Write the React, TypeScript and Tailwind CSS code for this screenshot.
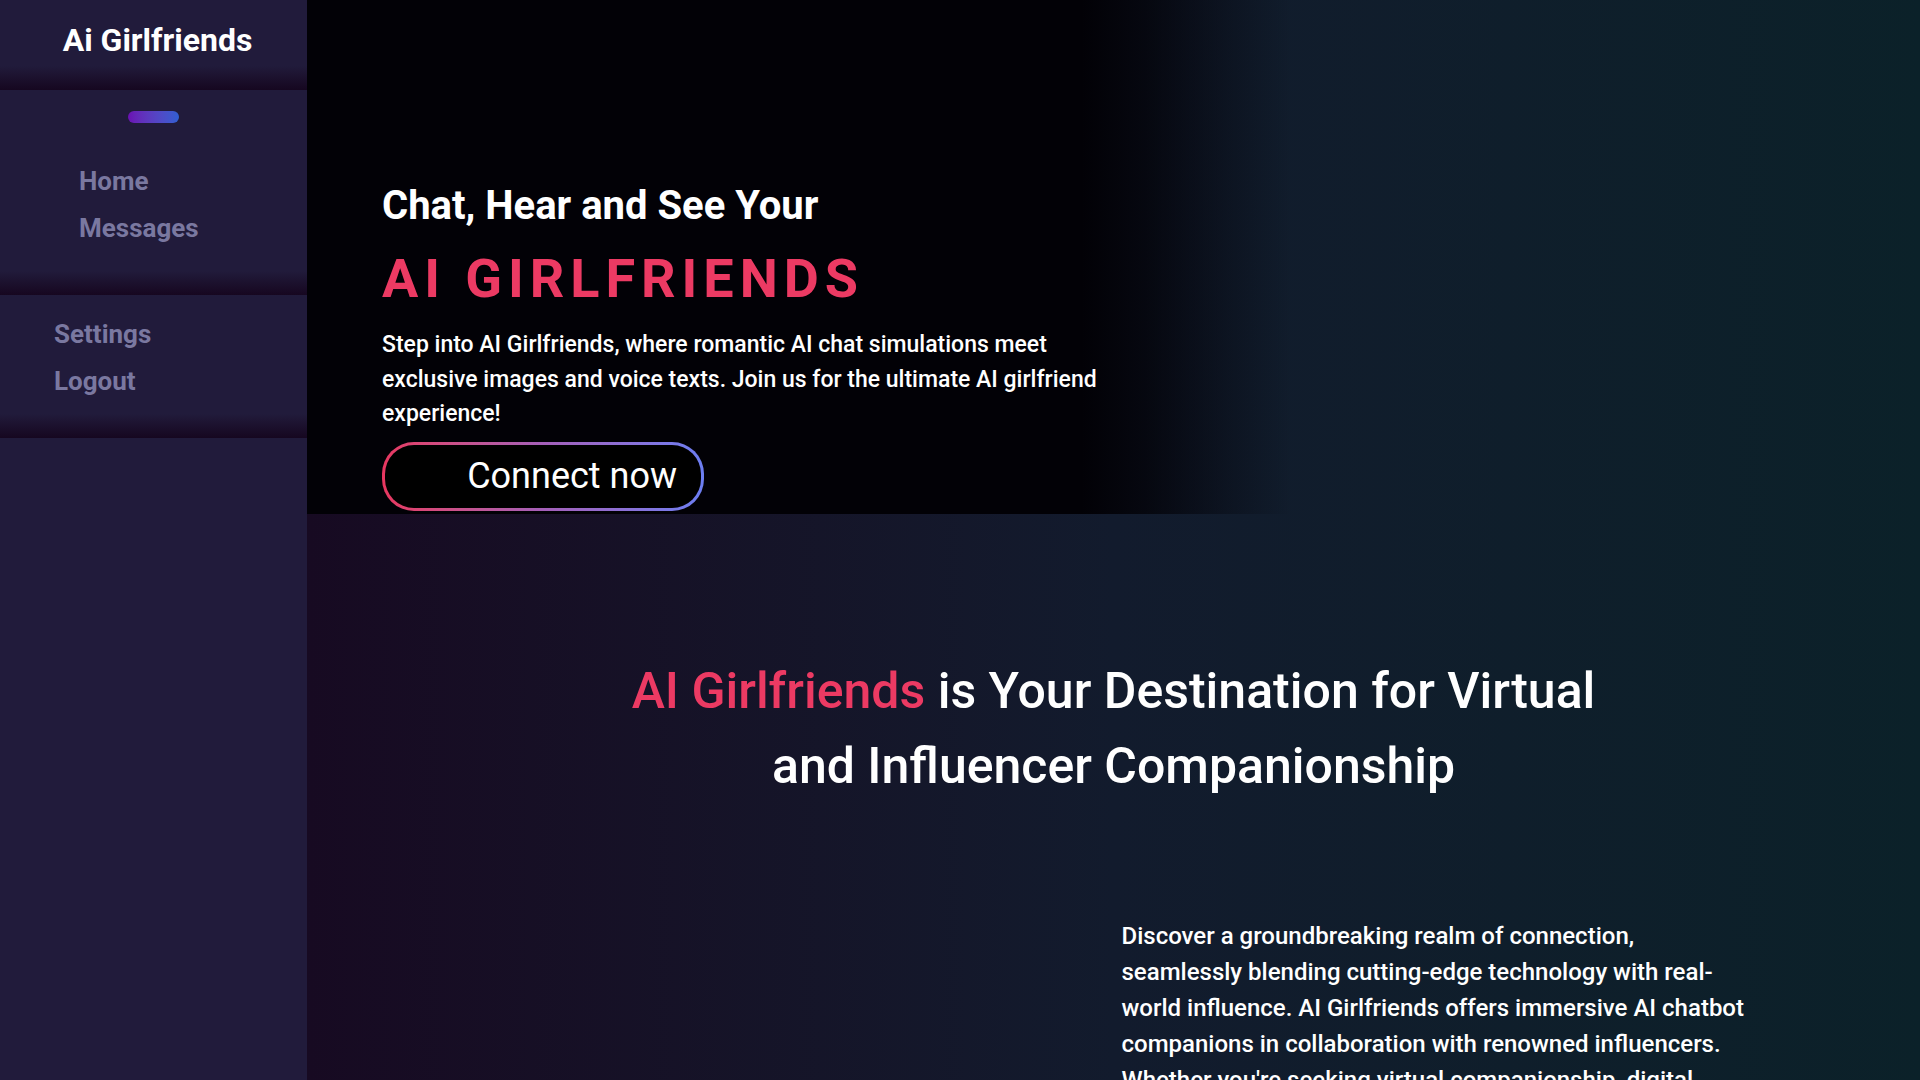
import React from "react"

const NAV_TOP = ["Home", "Messages"]
const NAV_BOTTOM = ["Settings", "Logout"]

function SectionShade() {
  return <div className="h-[24px] bg-linear-to-b from-[#211b3b] to-[#160720]" />
}

function Sidebar() {
  return (
    <aside className="w-[307px] shrink-0 h-full bg-[#211b3b] flex flex-col">
      {/* Logo */}
      <div className="h-[90px] flex flex-col">
        <div className="flex-1 flex justify-center pl-[8px] pt-[24px]">
          <span className="text-[32px] font-bold text-white leading-[32px]">Ai Girlfriends</span>
        </div>
        <SectionShade />
      </div>

      {/* Main nav */}
      <div className="h-[205px] flex flex-col">
        <div className="flex-1 flex flex-col">
          <div className="mt-[21px] mx-auto w-[51px] h-[12px] rounded-full bg-linear-to-r from-[#6a0fb3] to-[#2f5fd2]" />
          <nav className="mt-[35px] pl-[79px] flex flex-col">
            {NAV_TOP.map((item) => (
              <a key={item} href="#" className="text-[26px] leading-[47px] font-bold text-[#7a78a0]">
                {item}
              </a>
            ))}
          </nav>
        </div>
        <SectionShade />
      </div>

      {/* Account */}
      <div className="h-[143px] flex flex-col">
        <nav className="flex-1 pt-[16px] pl-[54px] flex flex-col">
          {NAV_BOTTOM.map((item) => (
            <a key={item} href="#" className="text-[26px] leading-[47px] font-bold text-[#7a78a0]">
              {item}
            </a>
          ))}
        </nav>
        <SectionShade />
      </div>
    </aside>
  )
}

function Hero() {
  return (
    <section className="h-[514px] bg-[linear-gradient(to_right,#020106_48%,rgba(2,1,6,0.75)_52%,rgba(2,1,6,0.3)_57%,transparent_61%)] pl-[75px] pt-[183px]">
      <h2 className="text-[40px] leading-[46px] font-bold text-white">Chat, Hear and See Your</h2>
      <h1 className="mt-[17px] text-[54px] leading-[65px] font-bold tracking-[0.11em] text-[#ec3a63]">
        AI GIRLFRIENDS
      </h1>
      <p className="mt-[17px] max-w-[740px] text-[23px] leading-[34.5px] font-medium text-white">
        Step into AI Girlfriends, where romantic AI chat simulations meet exclusive images and voice
        texts. Join us for the ultimate AI girlfriend experience!
      </p>
      <button className="mt-[10px] w-[322px] h-[69px] rounded-[32px] p-[3px] bg-linear-to-r from-[#e8365f] via-[#a45fb8] to-[#6c7ef2]">
        <span className="w-full h-full rounded-[29px] bg-black flex items-center justify-end pr-[24px] text-[36px] text-white">
          Connect now
        </span>
      </button>
    </section>
  )
}

function About() {
  return (
    <section className="pt-[140px]">
      <h2 className="max-w-[1000px] mx-auto text-center text-[50px] leading-[75px] font-medium text-white">
        <span className="text-[#ec3a63]">AI Girlfriends</span> is Your Destination for Virtual and
        Influencer Companionship
      </h2>
      <div className="mt-[114px] grid grid-cols-2 gap-4">
        <div />
        <p className="max-w-[630px] text-[24px] leading-[36px] font-medium text-white">
          Discover a groundbreaking realm of connection, seamlessly blending cutting-edge technology
          with real-world influence. AI Girlfriends offers immersive AI chatbot companions in
          collaboration with renowned influencers. Whether you're seeking virtual companionship, digital
          romance, or a meaningful connection with your favorite creators, our platform has you covered.
        </p>
      </div>
    </section>
  )
}

export default function App() {
  return (
    <div className="h-screen w-full flex overflow-hidden font-['Roboto',sans-serif]">
      <Sidebar />
      <main className="flex-1 h-full overflow-hidden bg-linear-to-r from-[#170a22] via-[#121b2d] to-[#0b2129]">
        <Hero />
        <About />
      </main>
    </div>
  )
}
